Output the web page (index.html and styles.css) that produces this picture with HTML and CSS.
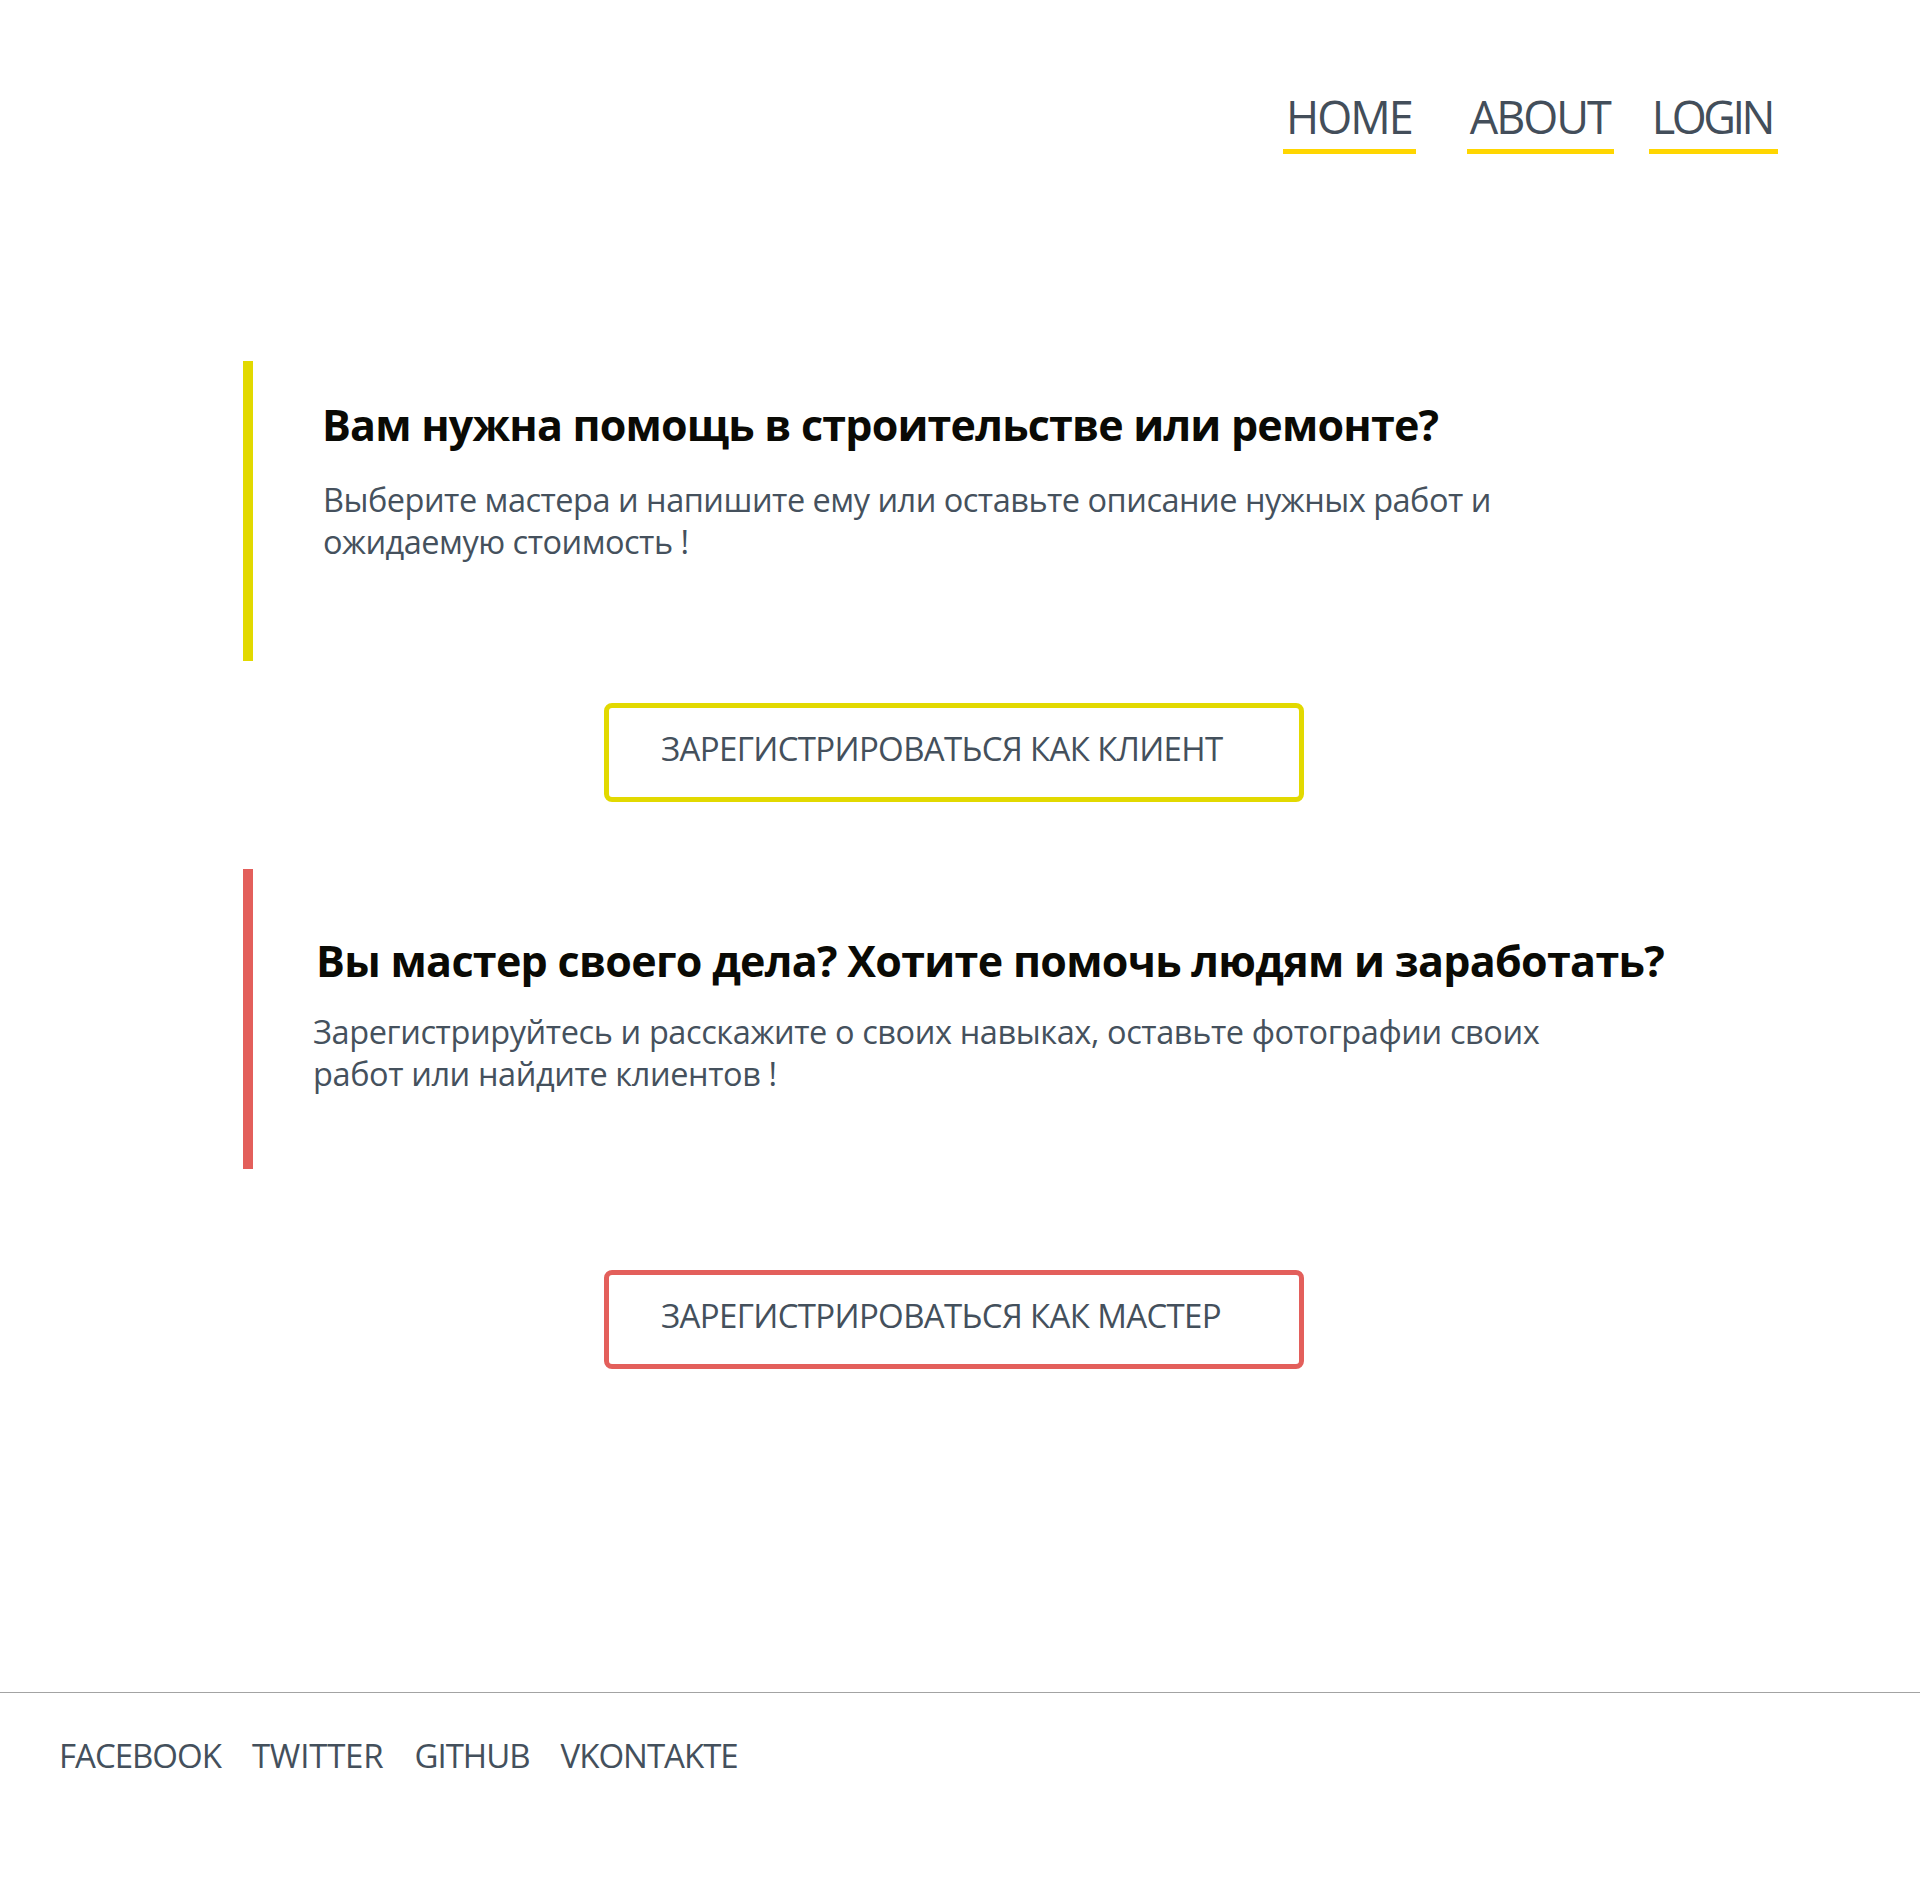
FILE: index.html
```html
<!DOCTYPE html>
<html lang="ru">
<head>
<meta charset="utf-8">
<title>Мастера</title>
<link rel="stylesheet" href="styles.css">
</head>
<body>
<header class="site-header">
  <nav class="main-nav">
    <a class="nav-link nav-home" href="#">HOME</a>
    <a class="nav-link nav-about" href="#">ABOUT</a>
    <a class="nav-link nav-login" href="#">LOGIN</a>
  </nav>
</header>
<main class="content">
  <section class="promo promo-client">
    <h2 class="promo-title">Вам нужна помощь в строительстве или ремонте?</h2>
    <p class="promo-text">Выберите мастера и напишите ему или оставьте описание нужных работ и ожидаемую стоимость !</p>
  </section>
  <div class="cta-row cta-row-client">
    <a class="cta cta-client" href="#">ЗАРЕГИСТРИРОВАТЬСЯ КАК КЛИЕНТ</a>
  </div>
  <section class="promo promo-master">
    <h2 class="promo-title">Вы мастер своего дела? Хотите помочь людям и заработать?</h2>
    <p class="promo-text">Зарегистрируйтесь и расскажите о своих навыках, оставьте фотографии своих работ или найдите клиентов !</p>
  </section>
  <div class="cta-row cta-row-master">
    <a class="cta cta-master" href="#">ЗАРЕГИСТРИРОВАТЬСЯ КАК МАСТЕР</a>
  </div>
</main>
<footer class="site-footer">
  <nav class="social">
    <a class="social-link" href="#">FACEBOOK</a>
    <a class="social-link social-twitter" href="#">TWITTER</a>
    <a class="social-link" href="#">GITHUB</a>
    <a class="social-link" href="#">VKONTAKTE</a>
  </nav>
</footer>
</body>
</html>
```
FILE: styles.css
```css
* { box-sizing: border-box; }
html, body { margin: 0; padding: 0; background: #fff; }
body {
  font-family: "Open Sans", "Noto Sans", sans-serif;
  color: #44505c;
  width: 1920px;
  min-height: 1880px;
}
a { text-decoration: none; color: inherit; }

/* header navigation */
.site-header {
  display: flex;
  justify-content: flex-end;
  padding: 94px 142px 0 0;
}
.main-nav { display: flex; }
.nav-link {
  font-size: 45px;
  line-height: 45px;
  letter-spacing: -2px;
  padding: 0 4px 10px 3px;
  border-bottom: 5px solid #ffd600;
  color: #434e5a;
}
.nav-home { margin-right: 51px; }
.nav-about { margin-right: 35px; }
.nav-login { letter-spacing: -3.5px; padding-right: 6px; }

/* promo blocks */
.promo {
  height: 300px;
  margin: 207px 0 0 243px;
  padding: 36px 0 0 69px;
  border-left: 10px solid #e2d900;
}
.promo-master {
  margin-top: 67px;
  padding-top: 64px;
  padding-left: 63px;
  border-left-color: #e35f5b;
}
.promo-title {
  margin: 0;
  font-size: 43px;
  line-height: 56px;
  font-weight: 700;
  letter-spacing: -0.8px;
  color: #0a0a05;
}
.promo-master .promo-title { letter-spacing: -0.7px; }
.promo-text {
  margin: 26px 0 0 1px;
  max-width: 1280px;
  font-size: 32.5px;
  line-height: 42px;
  letter-spacing: -0.5px;
  color: #45515d;
}
.promo-master .promo-text { margin-top: 22px; margin-left: -3px; letter-spacing: -0.4px; }

/* call-to-action buttons */
.cta-row { padding-left: 604px; margin-top: 42px; }
.cta-row-master { margin-top: 101px; }
.cta {
  display: flex;
  align-items: center;
  width: 700px;
  height: 99px;
  padding: 0 0 8px 52px;
  border: 5px solid #e2d900;
  border-radius: 8px;
  font-size: 33px;
  letter-spacing: -0.65px;
  color: #44505c;
}
.cta-master { border-color: #e35f5b; }

/* footer */
.site-footer {
  margin-top: 323px;
  border-top: 1px solid #a3a3a3;
  padding: 40px 0 0 59px;
}
.social { display: flex; gap: 31px; }
.social-link {
  font-size: 33px;
  letter-spacing: -1px;
  color: #44505c;
}
.social-twitter { letter-spacing: -0.2px; }
```
